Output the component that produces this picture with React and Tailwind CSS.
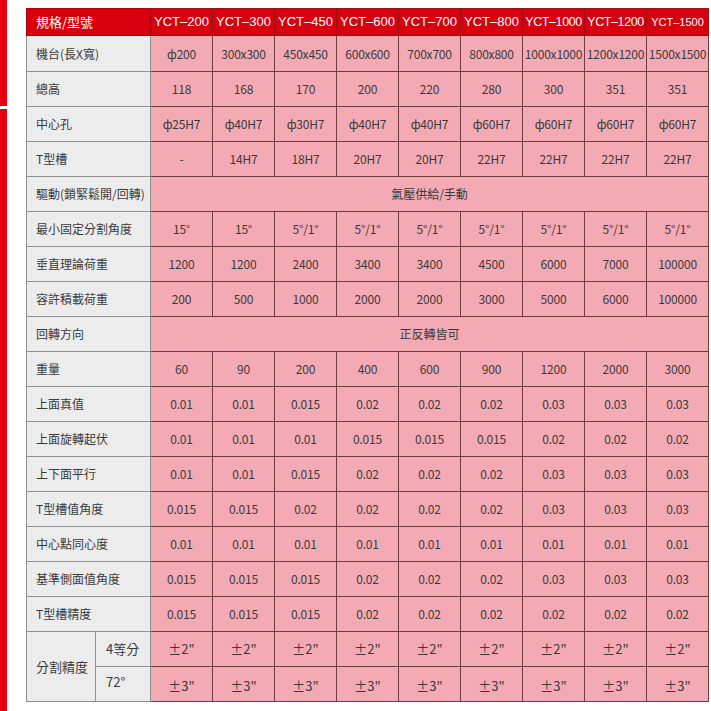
import React from "react";

const models = ["YCT-200", "YCT-300", "YCT-450", "YCT-600", "YCT-700", "YCT-800", "YCT-1000", "YCT-1200", "YCT-1500"];

const rows = [
  { label: "機台(長X寬)", values: ["ф200", "300x300", "450x450", "600x600", "700x700", "800x800", "1000x1000", "1200x1200", "1500x1500"] },
  { label: "總高", values: ["118", "168", "170", "200", "220", "280", "300", "351", "351"] },
  { label: "中心孔", values: ["ф25H7", "ф40H7", "ф30H7", "ф40H7", "ф40H7", "ф60H7", "ф60H7", "ф60H7", "ф60H7"] },
  { label: "T型槽", values: ["-", "14H7", "18H7", "20H7", "20H7", "22H7", "22H7", "22H7", "22H7"] },
  { label: "驅動(鎖緊鬆開/回轉)", span: "氣壓供給/手動" },
  { label: "最小固定分割角度", values: ["15°", "15°", "5°/1°", "5°/1°", "5°/1°", "5°/1°", "5°/1°", "5°/1°", "5°/1°"] },
  { label: "垂直理論荷重", values: ["1200", "1200", "2400", "3400", "3400", "4500", "6000", "7000", "100000"] },
  { label: "容許積載荷重", values: ["200", "500", "1000", "2000", "2000", "3000", "5000", "6000", "100000"] },
  { label: "回轉方向", span: "正反轉皆可" },
  { label: "重量", values: ["60", "90", "200", "400", "600", "900", "1200", "2000", "3000"] },
  { label: "上面真值", values: ["0.01", "0.01", "0.015", "0.02", "0.02", "0.02", "0.03", "0.03", "0.03"] },
  { label: "上面旋轉起伏", values: ["0.01", "0.01", "0.01", "0.015", "0.015", "0.015", "0.02", "0.02", "0.02"] },
  { label: "上下面平行", values: ["0.01", "0.01", "0.015", "0.02", "0.02", "0.02", "0.03", "0.03", "0.03"] },
  { label: "T型槽值角度", values: ["0.015", "0.015", "0.02", "0.02", "0.02", "0.02", "0.03", "0.03", "0.03"] },
  { label: "中心點同心度", values: ["0.01", "0.01", "0.01", "0.01", "0.01", "0.01", "0.01", "0.01", "0.01"] },
  { label: "基準側面值角度", values: ["0.015", "0.015", "0.015", "0.02", "0.02", "0.02", "0.03", "0.03", "0.03"] },
  { label: "T型槽精度", values: ["0.015", "0.015", "0.015", "0.02", "0.02", "0.02", "0.02", "0.02", "0.02"] },
];

const pink = "bg-[#f4aab4] border border-[#6e3b3b] text-center text-[12px] text-[#3a3a3a]";
const gray = "bg-[#ececec] border border-[#8f8f8f] text-[12px] text-[#3a3a3a]";

export default function App() {
  return (
    <div
      className="relative w-[711px] h-[711px] bg-white overflow-hidden"
      style={{ fontFamily: '"Noto Sans CJK TC", "Noto Sans", sans-serif' }}
    >
      {/* left red strip */}
      <div className="absolute left-0 top-0 w-[7px] h-[106px] bg-[#e60012]" />
      <div className="absolute left-0 top-[109px] w-[7px] h-[602px] bg-[#e60012]" />

      <div className="pl-[26px] pt-[8px]">
        <table className="table-fixed border-collapse w-[683px]">
          <colgroup>
            <col className="w-[69px]" />
            <col className="w-[55px]" />
            {models.map((m) => (
              <col key={m} className="w-[62px]" />
            ))}
          </colgroup>
          <thead>
            <tr className="h-[27px] bg-[#d7000f] text-white">
              <th colSpan={2} className="border border-[#b0000c] text-left font-normal text-[13px] pl-[9px]">
                規格/型號
              </th>
              {models.map((m) => (
                <th
                  key={m}
                  className={`border border-[#9a1010] font-normal whitespace-nowrap px-0 ${
                    m === "YCT-1500" ? "text-[11px]" : m === "YCT-1000" || m === "YCT-1200" ? "text-[12.5px] tracking-[-0.4px]" : "text-[13px]"
                  }`}
                  style={{ fontFamily: '"Liberation Sans", Arial, sans-serif' }}
                >
                  {m.replace("-", "–")}
                </th>
              ))}
            </tr>
          </thead>
          <tbody>
            {rows.map((r, i) => (
              <tr key={r.label} className={i === 0 ? "h-[36px]" : "h-[35px]"}>
                <td colSpan={2} className={`${gray} pl-[9px] whitespace-nowrap`}>
                  {r.label}
                </td>
                {r.span ? (
                  <td colSpan={9} className={pink}>
                    {r.span}
                  </td>
                ) : (
                  r.values.map((v, j) => (
                    <td key={j} className={`${pink} whitespace-nowrap px-0 tracking-[-0.2px]`}>
                      {v}
                    </td>
                  ))
                )}
              </tr>
            ))}
            <tr className="h-[35px]">
              <td rowSpan={2} className={`${gray} pl-[9px] text-[13px]`}>
                分割精度
              </td>
              <td className={`${gray} pl-[10px] text-[13px]`}>4等分</td>
              {models.map((m) => (
                <td key={m} className={`${pink} text-[13px]`}>
                  ±2"
                </td>
              ))}
            </tr>
            <tr className="h-[35px]">
              <td className={`${gray} pl-[10px] pb-[4px] text-[13px]`}>72°</td>
              {models.map((m) => (
                <td key={m} className={`${pink} pt-[4px] text-[13px]`}>
                  ±3"
                </td>
              ))}
            </tr>
          </tbody>
        </table>
      </div>
    </div>
  );
}
